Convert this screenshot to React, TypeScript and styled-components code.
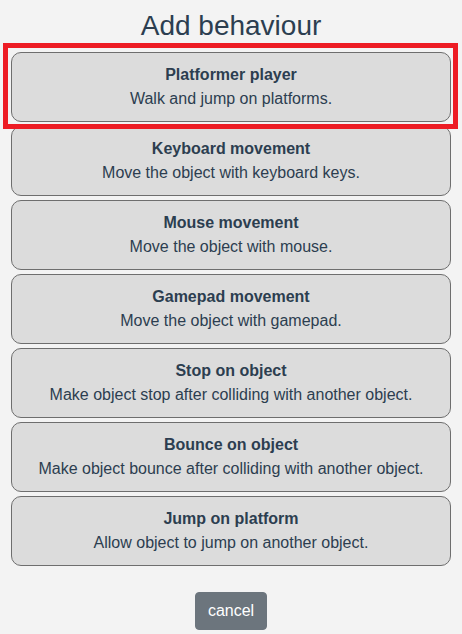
import React from 'react'
import styled, { createGlobalStyle } from 'styled-components'

interface Behaviour {
    name: string;
    description: string;
}

const behaviours: Behaviour[] = [
    { name: 'Platformer player', description: 'Walk and jump on platforms.' },
    { name: 'Keyboard movement', description: 'Move the object with keyboard keys.' },
    { name: 'Mouse movement', description: 'Move the object with mouse.' },
    { name: 'Gamepad movement', description: 'Move the object with gamepad.' },
    { name: 'Stop on object', description: 'Make object stop after colliding with another object.' },
    { name: 'Bounce on object', description: 'Make object bounce after colliding with another object.' },
    { name: 'Jump on platform', description: 'Allow object to jump on another object.' },
]

const GlobalStyle = createGlobalStyle`
    html, body {
        margin: 0;
        padding: 0;
        background: #f3f3f3;
        font-family: "Liberation Sans", Arial, sans-serif;
        color: #2c3e50;
    }
    * {
        box-sizing: border-box;
    }
`

const Dialog = styled.div`
    width: 462px;
    padding: 9px 11px 0;
    display: flex;
    flex-direction: column;
    align-items: center;
`

const Title = styled.h2`
    margin: 0 0 9px;
    font-size: 28px;
    font-weight: 400;
    line-height: 34px;
    text-align: center;
`

const List = styled.div`
    width: 100%;
    display: flex;
    flex-direction: column;
    row-gap: 4px;
`

const Option = styled.button<{ $highlighted?: boolean }>`
    width: 100%;
    height: 70px;
    padding: 10px 8px;
    border: 1px solid #6e6e6e;
    border-radius: 10px;
    background: #dcdcdc;
    color: #2c3e50;
    font-family: inherit;
    font-size: 16px;
    line-height: 24px;
    text-align: center;
    cursor: pointer;
    position: ${props => props.$highlighted ? 'relative' : 'static'};

    &::after {
        content: '';
        display: ${props => props.$highlighted ? 'block' : 'none'};
        position: absolute;
        left: -9px;
        top: -10px;
        right: -8px;
        bottom: -8px;
        border: 5px solid #ed1c24;
        pointer-events: none;
        z-index: 1;
    }
`

const OptionName = styled.div`
    font-weight: 700;
`

const OptionText = styled.div`
    font-weight: 400;
`

const CancelButton = styled.button`
    margin-top: 26px;
    height: 38px;
    padding: 6px 12px;
    border: 1px solid #6c757d;
    border-radius: 4px;
    background: #6c757d;
    color: #fff;
    font-family: inherit;
    font-size: 16px;
    line-height: 24px;
    cursor: pointer;
`

function App() {
    return (
        <>
            <GlobalStyle />
            <Dialog>
                <Title>Add behaviour</Title>
                <List>
                    {behaviours.map((b, i) => (
                        <Option key={b.name} $highlighted={i === 0}>
                            <OptionName>{b.name}</OptionName>
                            <OptionText>{b.description}</OptionText>
                        </Option>
                    ))}
                </List>
                <CancelButton>cancel</CancelButton>
            </Dialog>
        </>
    );
}

export default App;
